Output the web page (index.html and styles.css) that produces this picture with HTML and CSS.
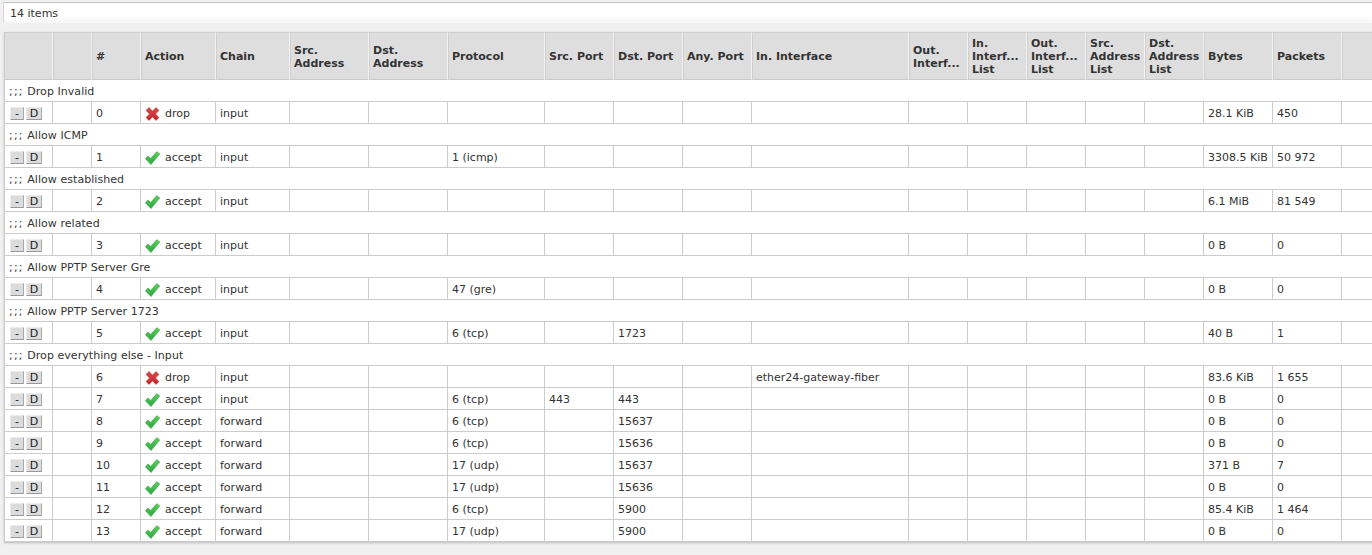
FILE: index.html
```html
<!DOCTYPE html>
<html lang="en">
<head>
<meta charset="utf-8">
<title>Firewall rules</title>
<link rel="stylesheet" href="styles.css">
</head>
<body>
<svg class="defs" width="0" height="0" aria-hidden="true">
  <defs>
    <linearGradient id="gok" x1="0" y1="0" x2="0" y2="1"><stop offset="0" stop-color="#5fcf5f"/><stop offset="1" stop-color="#2aa53c"/></linearGradient>
    <linearGradient id="gno" x1="0" y1="0" x2="0" y2="1"><stop offset="0" stop-color="#e0484c"/><stop offset="1" stop-color="#c4282e"/></linearGradient>
    <symbol id="ok" viewBox="0 0 15 14"><path d="M0.4 7.8 L3 5 L5.6 7.4 L11.8 0.6 L14.8 3 L6 13.6 Z" fill="url(#gok)" stroke="#2b9a3a" stroke-width="0.5" stroke-linejoin="round"/></symbol>
    <symbol id="no" viewBox="0 0 14 14"><path d="M0.6 3.4 L3.4 0.6 L7 4 L10.6 0.6 L13.4 3.4 L10 7 L13.4 10.6 L10.6 13.4 L7 10 L3.4 13.4 L0.6 10.6 L4 7 Z" fill="url(#gno)" stroke="#a82228" stroke-width="0.5" stroke-linejoin="round"/></symbol>
  </defs>
</svg>
<div class="bar">14 items</div>
<table class="grid">
  <colgroup>
    <col class="c49"><col class="c39"><col class="c49"><col class="c75"><col class="c74"><col class="c79"><col class="c79"><col class="c97"><col class="c69"><col class="c69"><col class="c69"><col class="c157"><col class="c59"><col class="c59"><col class="c59"><col class="c59"><col class="c59"><col class="c69"><col class="c69"><col class="c60">
  </colgroup>
  <thead>
    <tr><th></th><th></th><th>#</th><th>Action</th><th>Chain</th><th class="two">Src.<br>Address</th><th class="two">Dst.<br>Address</th><th>Protocol</th><th>Src. Port</th><th>Dst. Port</th><th>Any. Port</th><th>In. Interface</th><th class="two">Out.<br>Interf...</th><th>In.<br>Interf...<br>List</th><th>Out.<br>Interf...<br>List</th><th>Src.<br>Address<br>List</th><th>Dst.<br>Address<br>List</th><th>Bytes</th><th>Packets</th><th></th></tr>
  </thead>
  <tbody>
    <tr><td class="note" colspan="20"><span class="semi">;;;</span> Drop Invalid</td></tr>
    <tr><td class="btns"><span class="btn">-</span><span class="btn">D</span></td><td></td><td>0</td><td><svg class="ico"><use href="#no"/></svg>drop</td><td>input</td><td></td><td></td><td></td><td></td><td></td><td></td><td></td><td></td><td></td><td></td><td></td><td></td><td>28.1 KiB</td><td>450</td><td></td></tr>
    <tr><td class="note" colspan="20"><span class="semi">;;;</span> Allow ICMP</td></tr>
    <tr><td class="btns"><span class="btn">-</span><span class="btn">D</span></td><td></td><td>1</td><td><svg class="ico"><use href="#ok"/></svg>accept</td><td>input</td><td></td><td></td><td>1 (icmp)</td><td></td><td></td><td></td><td></td><td></td><td></td><td></td><td></td><td></td><td>3308.5 KiB</td><td>50 972</td><td></td></tr>
    <tr><td class="note" colspan="20"><span class="semi">;;;</span> Allow established</td></tr>
    <tr><td class="btns"><span class="btn">-</span><span class="btn">D</span></td><td></td><td>2</td><td><svg class="ico"><use href="#ok"/></svg>accept</td><td>input</td><td></td><td></td><td></td><td></td><td></td><td></td><td></td><td></td><td></td><td></td><td></td><td></td><td>6.1 MiB</td><td>81 549</td><td></td></tr>
    <tr><td class="note" colspan="20"><span class="semi">;;;</span> Allow related</td></tr>
    <tr><td class="btns"><span class="btn">-</span><span class="btn">D</span></td><td></td><td>3</td><td><svg class="ico"><use href="#ok"/></svg>accept</td><td>input</td><td></td><td></td><td></td><td></td><td></td><td></td><td></td><td></td><td></td><td></td><td></td><td></td><td>0 B</td><td>0</td><td></td></tr>
    <tr><td class="note" colspan="20"><span class="semi">;;;</span> Allow PPTP Server Gre</td></tr>
    <tr><td class="btns"><span class="btn">-</span><span class="btn">D</span></td><td></td><td>4</td><td><svg class="ico"><use href="#ok"/></svg>accept</td><td>input</td><td></td><td></td><td>47 (gre)</td><td></td><td></td><td></td><td></td><td></td><td></td><td></td><td></td><td></td><td>0 B</td><td>0</td><td></td></tr>
    <tr><td class="note" colspan="20"><span class="semi">;;;</span> Allow PPTP Server 1723</td></tr>
    <tr><td class="btns"><span class="btn">-</span><span class="btn">D</span></td><td></td><td>5</td><td><svg class="ico"><use href="#ok"/></svg>accept</td><td>input</td><td></td><td></td><td>6 (tcp)</td><td></td><td>1723</td><td></td><td></td><td></td><td></td><td></td><td></td><td></td><td>40 B</td><td>1</td><td></td></tr>
    <tr><td class="note" colspan="20"><span class="semi">;;;</span> Drop everything else - Input</td></tr>
    <tr><td class="btns"><span class="btn">-</span><span class="btn">D</span></td><td></td><td>6</td><td><svg class="ico"><use href="#no"/></svg>drop</td><td>input</td><td></td><td></td><td></td><td></td><td></td><td></td><td>ether24-gateway-fiber</td><td></td><td></td><td></td><td></td><td></td><td>83.6 KiB</td><td>1 655</td><td></td></tr>
    <tr><td class="btns"><span class="btn">-</span><span class="btn">D</span></td><td></td><td>7</td><td><svg class="ico"><use href="#ok"/></svg>accept</td><td>input</td><td></td><td></td><td>6 (tcp)</td><td>443</td><td>443</td><td></td><td></td><td></td><td></td><td></td><td></td><td></td><td>0 B</td><td>0</td><td></td></tr>
    <tr><td class="btns"><span class="btn">-</span><span class="btn">D</span></td><td></td><td>8</td><td><svg class="ico"><use href="#ok"/></svg>accept</td><td>forward</td><td></td><td></td><td>6 (tcp)</td><td></td><td>15637</td><td></td><td></td><td></td><td></td><td></td><td></td><td></td><td>0 B</td><td>0</td><td></td></tr>
    <tr><td class="btns"><span class="btn">-</span><span class="btn">D</span></td><td></td><td>9</td><td><svg class="ico"><use href="#ok"/></svg>accept</td><td>forward</td><td></td><td></td><td>6 (tcp)</td><td></td><td>15636</td><td></td><td></td><td></td><td></td><td></td><td></td><td></td><td>0 B</td><td>0</td><td></td></tr>
    <tr><td class="btns"><span class="btn">-</span><span class="btn">D</span></td><td></td><td>10</td><td><svg class="ico"><use href="#ok"/></svg>accept</td><td>forward</td><td></td><td></td><td>17 (udp)</td><td></td><td>15637</td><td></td><td></td><td></td><td></td><td></td><td></td><td></td><td>371 B</td><td>7</td><td></td></tr>
    <tr><td class="btns"><span class="btn">-</span><span class="btn">D</span></td><td></td><td>11</td><td><svg class="ico"><use href="#ok"/></svg>accept</td><td>forward</td><td></td><td></td><td>17 (udp)</td><td></td><td>15636</td><td></td><td></td><td></td><td></td><td></td><td></td><td></td><td>0 B</td><td>0</td><td></td></tr>
    <tr><td class="btns"><span class="btn">-</span><span class="btn">D</span></td><td></td><td>12</td><td><svg class="ico"><use href="#ok"/></svg>accept</td><td>forward</td><td></td><td></td><td>6 (tcp)</td><td></td><td>5900</td><td></td><td></td><td></td><td></td><td></td><td></td><td></td><td>85.4 KiB</td><td>1 464</td><td></td></tr>
    <tr><td class="btns"><span class="btn">-</span><span class="btn">D</span></td><td></td><td>13</td><td><svg class="ico"><use href="#ok"/></svg>accept</td><td>forward</td><td></td><td></td><td>17 (udp)</td><td></td><td>5900</td><td></td><td></td><td></td><td></td><td></td><td></td><td></td><td>0 B</td><td>0</td><td></td></tr>
  </tbody>
</table>
</body>
</html>
```
FILE: styles.css
```css
html, body { margin: 0; padding: 0; height: 100%; overflow: hidden; background: #f0f0f0; }
body { padding: 2px 0 0 3px; box-sizing: border-box; font: 11px/13px "DejaVu Sans", Verdana, sans-serif; color: #333; }
.defs { position: absolute; }
.bar { height: 20px; line-height: 21px; padding-left: 6px; background: linear-gradient(#fff 60%, #f7f7f7); border-top: 1px solid #c4c4c4; border-left: 1px solid #d4d4d4; }
.grid { margin: 9px 0 0 1px; table-layout: fixed; width: 1398px; border-collapse: separate; border-spacing: 0; background: #fff; box-shadow: 0 1px 2px #bbb; }
.c49 { width: 49px; } .c39 { width: 39px; } .c75 { width: 75px; } .c74 { width: 74px; } .c79 { width: 79px; } .c97 { width: 97px; } .c69 { width: 69px; } .c157 { width: 157px; } .c59 { width: 59px; } .c60 { width: 60px; }
th { height: 48px; padding: 0 0 0 3px; box-sizing: border-box; background: #dedede; border-right: 1px solid #f2f2f2; border-left: 1px solid #cfcfcf; border-top: 1px solid #cfcfcf; border-bottom: 1px solid #c8c8c8; text-align: left; font-weight: bold; font-size: 11px; line-height: 13px; color: #333; white-space: nowrap; overflow: hidden; }
th.two { padding-top: 2px; }
td { height: 22px; padding: 2px 0 0 4px; box-sizing: border-box; border-right: 1px solid #ccc; border-bottom: 1px solid #ccc; white-space: nowrap; overflow: hidden; }
td.note { padding-left: 4px; border-right: 0; border-left: 1px solid #ccc; letter-spacing: 0.05px; }
.semi { letter-spacing: 1.2px; }
td.btns { padding-left: 5px; border-left: 1px solid #ccc; }
.btn { display: inline-block; box-sizing: border-box; width: 14px; height: 13px; line-height: 12px; margin-right: 2px; text-align: center; font-size: 11px; background: #dcdcdc; border: 1px solid #bbb; border-color: #ececec #aaa #999 #ececec; color: #222; vertical-align: middle; }
.btn + .btn { width: 16px; margin-right: 0; }
.ico { width: 15px; height: 14px; margin-right: 5px; vertical-align: middle; }
```
